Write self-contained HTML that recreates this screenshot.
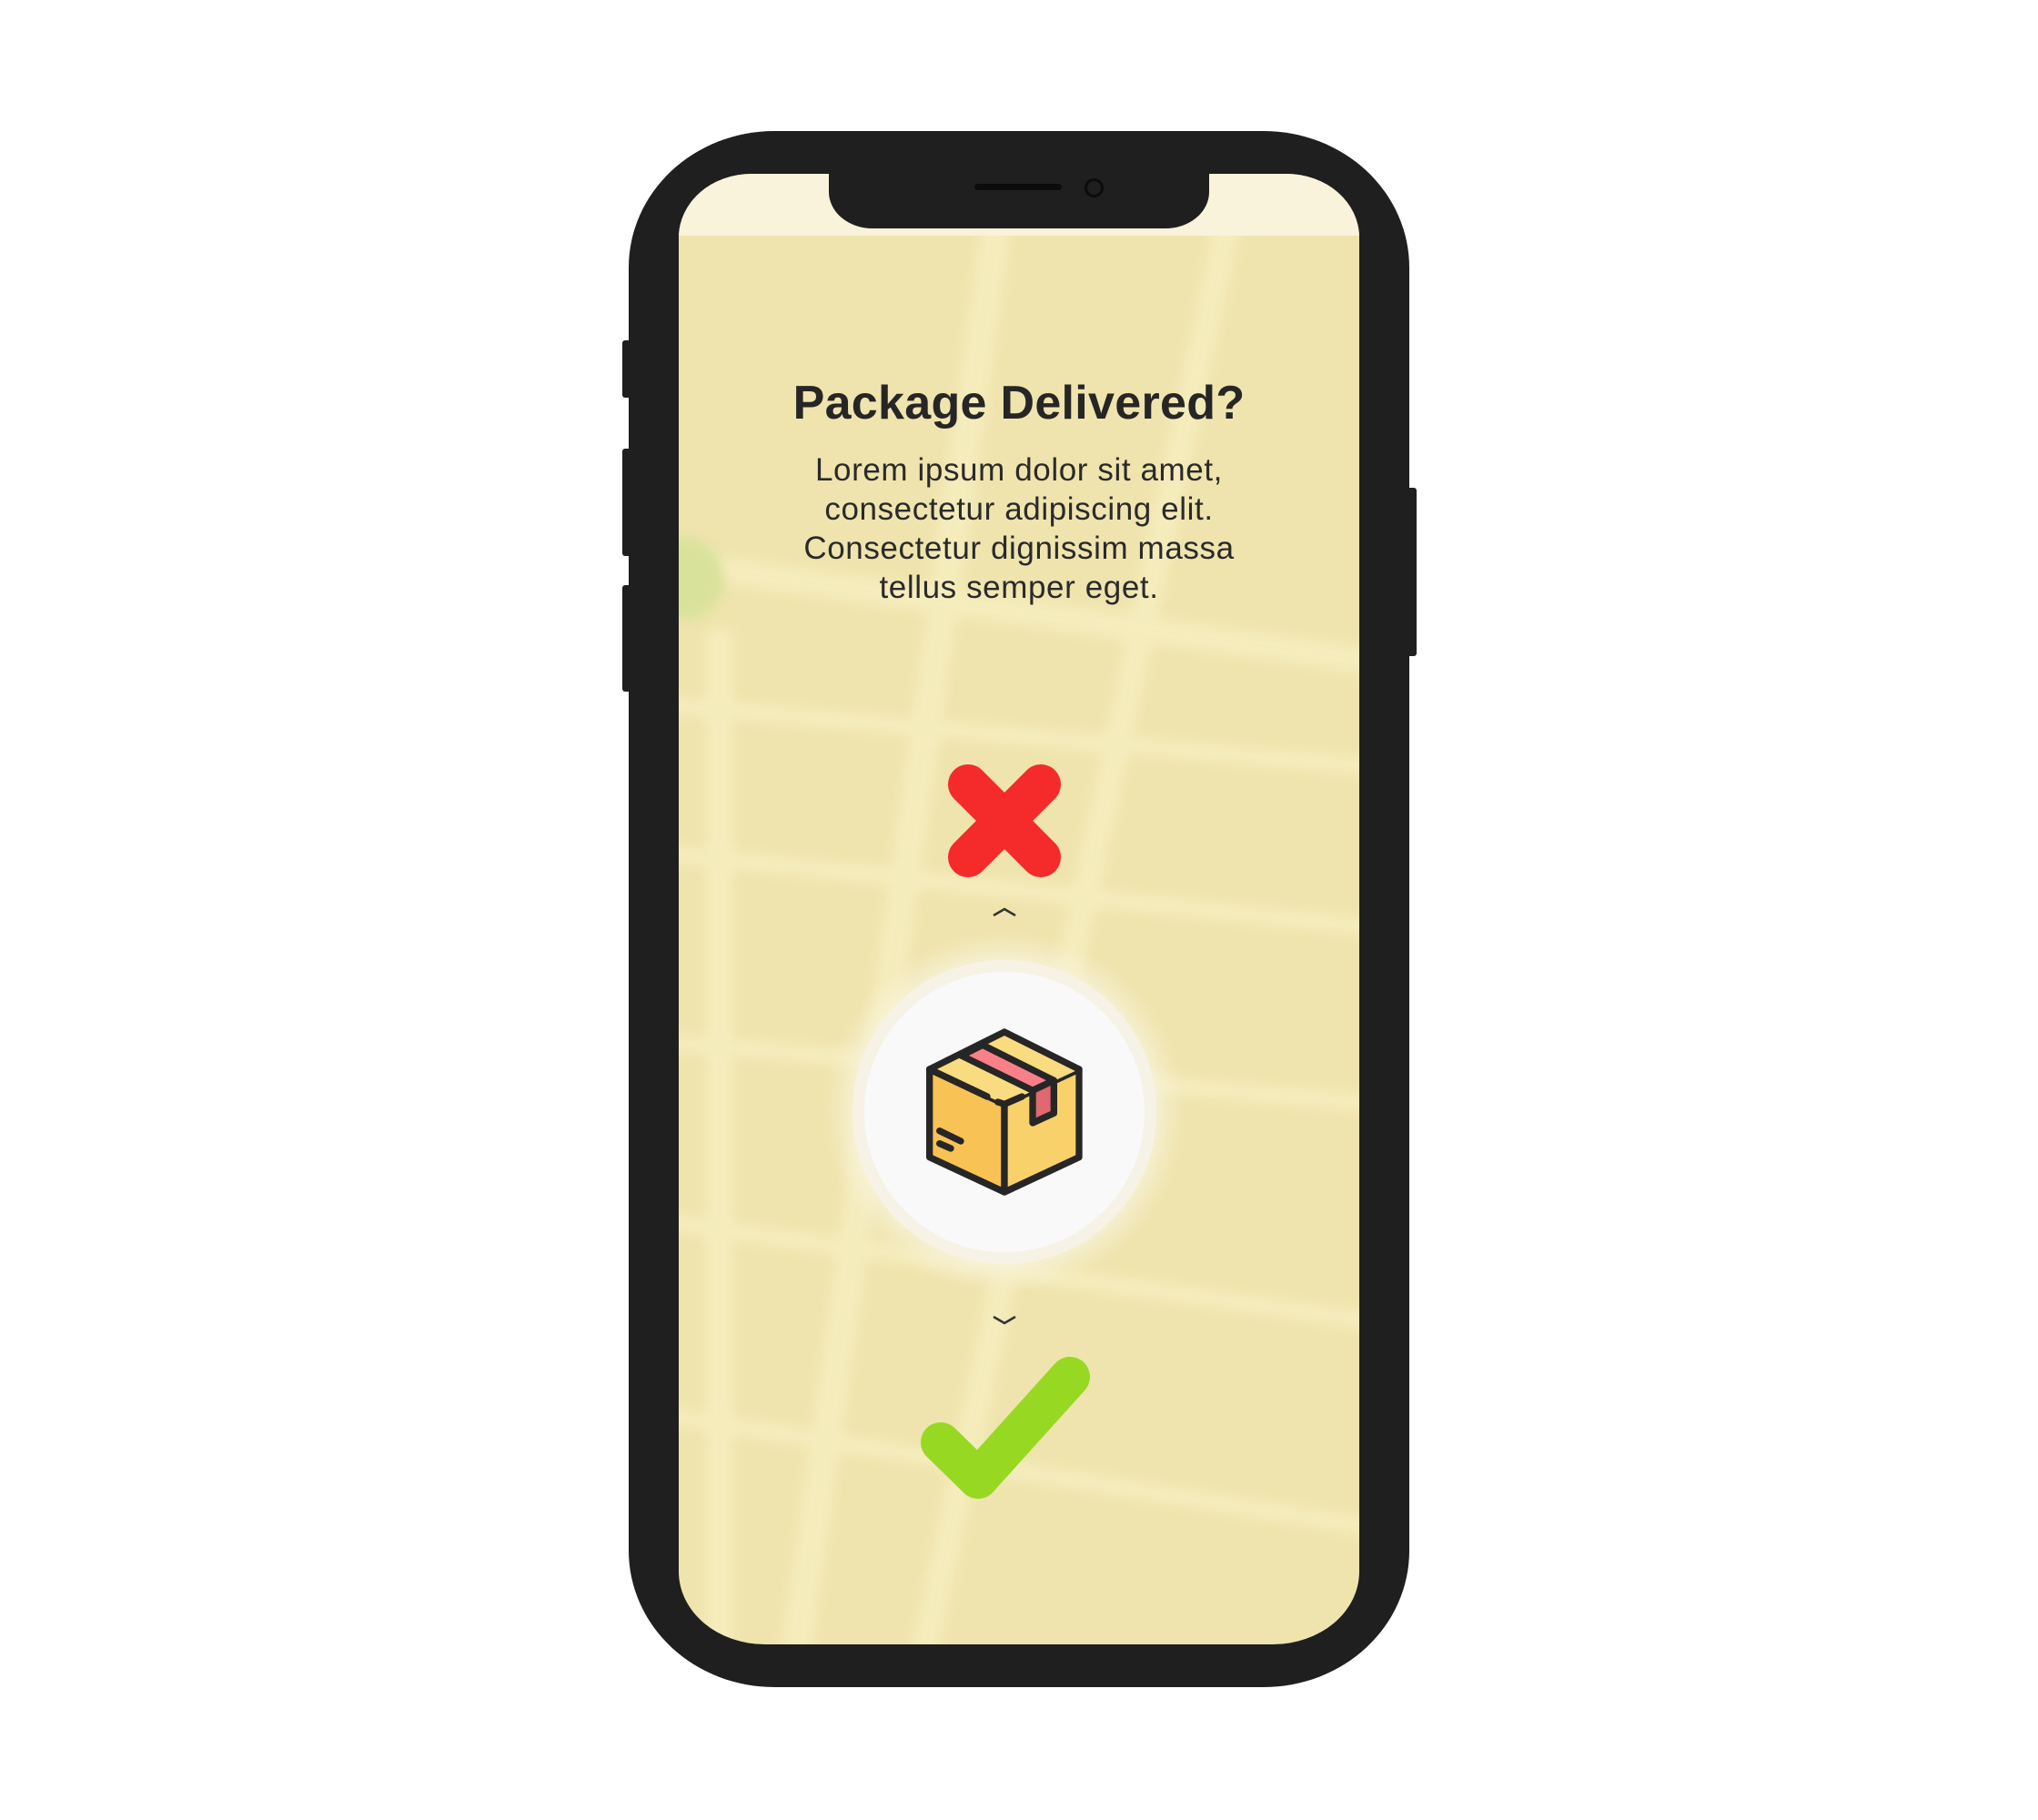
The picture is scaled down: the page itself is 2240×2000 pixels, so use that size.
<!DOCTYPE html>
<html><head><meta charset="utf-8"><style>
html,body{margin:0;padding:0;background:#fff;width:2240px;height:2000px;overflow:hidden;position:relative;font-family:"Liberation Sans",sans-serif}
.abs{position:absolute}
.phone{left:691px;top:144px;width:858px;height:1710px;background:#1f1f1f;border-radius:160px/150px}
.btn{background:#1f1f1f;border-radius:3px}
.screen{left:746px;top:191px;width:748px;height:1616px;background:#efe4ad;border-radius:80px 80px 95px 95px/70px 70px 80px 80px;overflow:hidden}
.status{left:0;top:0;width:748px;height:68px;background:#f8f3da}
.notch{left:165px;top:0;width:418px;height:60px;background:#1f1f1f;border-radius:0 0 48px 48px/0 0 40px 40px}
.road{position:absolute;background:#f5ecbc;filter:blur(6px)}
h1{position:absolute;left:0;width:748px;top:222px;margin:0;text-align:center;font-size:52px;font-weight:bold;color:#262626;letter-spacing:0.3px}
p{position:absolute;left:0;width:748px;top:304px;margin:0;text-align:center;font-size:35px;line-height:43px;color:#2a2a2a;letter-spacing:0.6px}
</style></head><body>
<div class="abs btn" style="left:684px;top:374px;width:10px;height:63px"></div>
<div class="abs btn" style="left:684px;top:493px;width:10px;height:118px"></div>
<div class="abs btn" style="left:684px;top:643px;width:10px;height:117px"></div>
<div class="abs btn" style="left:1546px;top:536px;width:11px;height:185px"></div>
<div class="abs phone"></div>
<div class="abs screen">
  <div class="road" style="left:340px;top:0;width:34px;height:1700px;transform:rotate(8deg);transform-origin:top"></div>
  <div class="road" style="left:600px;top:0;width:30px;height:1700px;transform:rotate(12deg);transform-origin:top"></div>
  <div class="road" style="left:30px;top:500px;width:30px;height:1200px"></div>
  <div class="road" style="left:-50px;top:470px;width:900px;height:30px;transform:rotate(8deg)"></div>
  <div class="road" style="left:-50px;top:610px;width:900px;height:20px;transform:rotate(5deg)"></div>
  <div class="road" style="left:-50px;top:780px;width:900px;height:20px;transform:rotate(6deg)"></div>
  <div class="road" style="left:-50px;top:980px;width:900px;height:20px;transform:rotate(5deg)"></div>
  <div class="road" style="left:-50px;top:1200px;width:900px;height:20px;transform:rotate(8deg)"></div>
  <div class="road" style="left:-50px;top:1420px;width:900px;height:20px;transform:rotate(9deg)"></div>
  <div class="abs" style="left:-40px;top:400px;width:90px;height:90px;border-radius:50%;background:#d8e29a;filter:blur(6px)"></div>
  <div class="abs status"></div>
  <div class="abs notch"></div>
  <div class="abs" style="left:325px;top:11px;width:96px;height:7px;border-radius:4px;background:#0c0c0c"></div>
  <div class="abs" style="left:446px;top:5px;width:15px;height:15px;border-radius:50%;border:3px solid #0c0c0c"></div>
  <h1>Package Delivered?</h1>
  <p>Lorem ipsum dolor sit amet,<br>consectetur adipiscing elit.<br>Consectetur dignissim massa<br>tellus semper eget.</p>
</div>
<svg class="abs" style="left:0;top:0" width="2240" height="2000">
  <defs><radialGradient id="g"><stop offset="0.75" stop-color="#fbf8ea"/><stop offset="1" stop-color="#f6efd2" stop-opacity="0"/></radialGradient></defs>
  <line x1="1064" y1="862" x2="1144" y2="942" stroke="#f52a2a" stroke-width="44" stroke-linecap="round"/>
  <line x1="1144" y1="862" x2="1064" y2="942" stroke="#f52a2a" stroke-width="44" stroke-linecap="round"/>
  <polyline points="1092,1006 1104,999 1116,1006" fill="none" stroke="#333" stroke-width="2.5"/>
  <polyline points="1092,1447 1104,1454 1116,1447" fill="none" stroke="#333" stroke-width="2.5"/>
  <circle cx="1104" cy="1222" r="200" fill="url(#g)"/>
  <circle cx="1104" cy="1222" r="167" fill="#f6f3e6"/>
  <circle cx="1104" cy="1222" r="154" fill="#f9f9f9"/>
  <polyline points="1034,1585 1075,1625 1176,1513" fill="none" stroke="#97d823" stroke-width="44" stroke-linecap="round" stroke-linejoin="round"/>
</svg>
<svg class="abs" style="left:900px;top:1050px" width="440" height="400" viewBox="0 0 1320 1200">
  <g stroke="#262626" stroke-width="22" stroke-linejoin="round" stroke-linecap="round">
    <polygon points="365,375 612,490 612,780 365,665" fill="#f8c255"/>
    <polygon points="612,490 858,375 858,665 612,780" fill="#f9d16a"/>
    <polygon points="365,375 612,252 858,375 612,490" fill="#f9dc80" stroke="none"/>
    <polygon points="470,330 540,295 775,412 705,445" fill="#f98088"/>
    <polygon points="705,445 775,412 775,520 705,552" fill="#e06870"/>
    <polyline points="365,375 612,252 858,375" fill="none"/>
    <line x1="365" y1="375" x2="555" y2="465"/>
    <line x1="590" y1="483" x2="612" y2="490"/>
    <line x1="612" y1="490" x2="670" y2="465"/>
    <line x1="398" y1="578" x2="468" y2="612"/>
    <line x1="398" y1="620" x2="435" y2="636"/>
  </g>
</svg>
</body></html>
